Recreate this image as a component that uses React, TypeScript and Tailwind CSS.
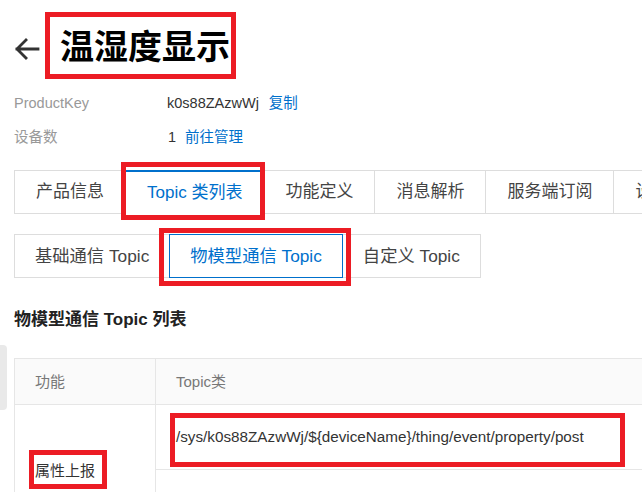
import React from 'react';

const tabs = ['产品信息', 'Topic 类列表', '功能定义', '消息解析', '服务端订阅', '设备开发'];
const subTabs = ['基础通信 Topic', '物模型通信 Topic', '自定义 Topic'];

function Mark({ className }: { className: string }) {
  return <span className={`pointer-events-none absolute border-[5px] border-[#ec1c24] ${className}`} />;
}

export default function App() {
  return (
    <div className="relative h-[492px] w-[642px] overflow-hidden bg-white font-['Liberation_Sans','Noto_Sans_CJK_SC',sans-serif] text-[#333]">
      <div className="absolute left-0 top-[345px] h-[65px] w-[7px] rounded-r-[4px] bg-[#e9e9e9]" />

      <div className="pl-[14px] pt-[27px]">
        {/* header */}
        <div className="flex items-center">
          <svg width="26" height="22" viewBox="0 0 26 22" className="mt-[3px] shrink-0">
            <path d="M24 11H3M12 2L3 11l9 9" fill="none" stroke="#333" strokeWidth="2.8" strokeLinecap="square" />
          </svg>
          <h1 className="relative ml-[20px] text-[34px] font-bold leading-[40px] text-black">
            温湿度显示
            <Mark className="-bottom-[12px] -left-[15px] -right-[6px] -top-[15px]" />
          </h1>
        </div>

        <div className="mt-[26px] flex text-[14.5px] leading-[20px]">
          <span className="w-[153px] text-[#999]">ProductKey</span>
          <span>k0s88ZAzwWj</span>
          <span className="ml-[10px] text-[#0070cc]">复制</span>
        </div>
        <div className="mt-[14px] flex text-[14.5px] leading-[20px]">
          <span className="w-[153px] text-[#999]">设备数</span>
          <span className="pl-[1px]">1</span>
          <span className="ml-[9px] text-[#0070cc]">前往管理</span>
        </div>

        {/* main tabs */}
        <div className="mt-[23px] flex border-l border-[#ddd] text-[17px] leading-[22px]">
          {tabs.map((t, i) => (
            <div
              key={t}
              className={
                i === 1
                  ? 'relative flex h-[44px] shrink-0 items-center whitespace-nowrap border-b border-r border-t-2 border-b-white border-r-[#ddd] border-t-[#0070cc] px-[21px] text-[#0070cc]'
                  : 'flex h-[44px] shrink-0 items-center whitespace-nowrap border-y border-r border-[#ddd] px-[21px] text-[#444]'
              }
            >
              {t}
              {i === 1 && <Mark className="-bottom-[7px] -left-[5px] -right-[2px] -top-[10px]" />}
            </div>
          ))}
        </div>

        {/* sub tabs */}
        <div className="mt-[20px] flex text-[17.3px] leading-[22px]">
          {subTabs.map((t, i) => (
            <div
              key={t}
              className={
                i === 1
                  ? 'relative z-10 -ml-px flex h-[44px] items-center whitespace-nowrap border border-[#0070cc] px-[20px] text-[#0070cc]'
                  : `flex h-[44px] items-center whitespace-nowrap border border-[#ddd] px-[20px] text-[#444] ${i > 0 ? '-ml-px' : ''}`
              }
            >
              {t}
              {i === 1 && <Mark className="-bottom-[9px] -left-[11px] -right-[9px] -top-[7px]" />}
            </div>
          ))}
        </div>

        <h2 className="mt-[30px] text-[17px] font-bold leading-[24px] text-[#222]">物模型通信 Topic 列表</h2>

        {/* table */}
        <div className="mt-[26px] w-[720px] border border-[#e6e6e6] text-[15px] leading-[22px]">
          <div className="flex h-[46px] border-b border-[#e6e6e6] bg-[#fafafa] text-[#777]">
            <div className="flex w-[141px] items-center border-r border-[#e6e6e6] pl-[20px]">功能</div>
            <div className="flex flex-1 items-center pl-[20px]">Topic类</div>
          </div>
          <div className="flex">
            <div className="flex w-[141px] items-center border-r border-[#e6e6e6] pl-[20px]">
              <span className="relative">
                属性上报
                <Mark className="-bottom-[7px] -left-[6px] -right-[12px] -top-[10px]" />
              </span>
            </div>
            <div className="flex-1">
              <div className="relative flex h-[65px] items-center border-b border-[#e6e6e6] pl-[20px] text-[15.25px]">
                /sys/k0s88ZAzwWj/${'{'}deviceName{'}'}/thing/event/property/post
                <Mark className="left-[14px] top-[8px] h-[54px] w-[455px]" />
              </div>
              <div className="h-[66px]" />
            </div>
          </div>
        </div>
      </div>
    </div>
  );
}
